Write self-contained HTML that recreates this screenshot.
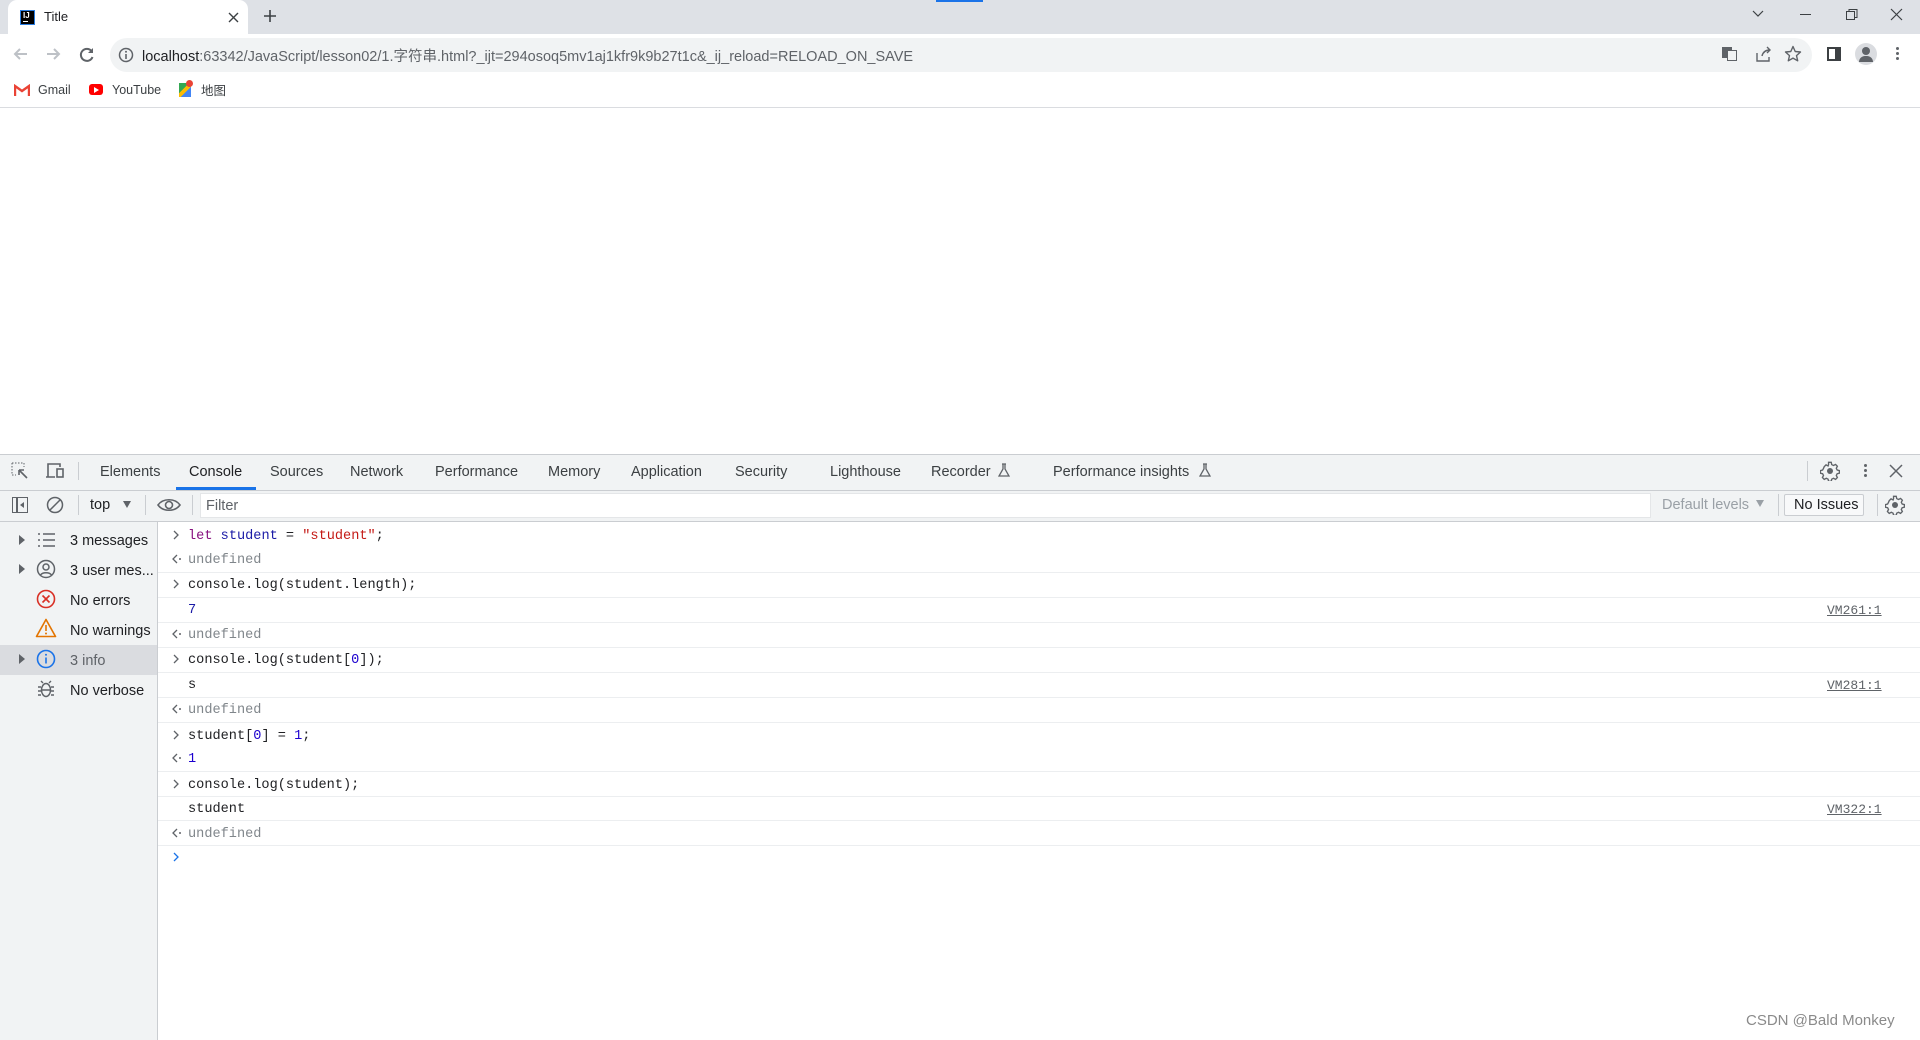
<!DOCTYPE html>
<html><head><meta charset="utf-8"><style>
*{margin:0;padding:0;box-sizing:border-box}
body{width:1920px;height:1040px;position:relative;overflow:hidden;background:#fff;font-family:"Liberation Sans","Noto Sans CJK SC",sans-serif;color:#202124}
.a{position:absolute;white-space:nowrap}
.ui{font-size:14.5px;color:#3c4043}
.m{font-family:"Liberation Mono",monospace;font-size:13.6px;color:#202124}
.hl{position:absolute;left:158px;right:0;height:1px;background:#eceef0}
.g{color:#80868b}
.ch{position:absolute;left:171px}
</style></head><body>
<!-- tab strip -->
<div class="a" style="left:0;top:0;width:1920px;height:34px;background:#dee1e6"></div>
<div class="a" style="left:936px;top:0;width:47px;height:2px;background:#1a73e8"></div>
<div class="a" style="left:8px;top:0;width:240px;height:34px;background:#fff;border-radius:9px 9px 0 0"></div>
<div class="a" style="left:20px;top:10px;width:15px;height:15px;background:#000;border:1px solid #2a7de1"></div>
<div class="a" style="left:23px;top:11px;font-size:8px;color:#fff;font-weight:bold">IJ</div>
<div class="a" style="left:23px;top:21px;width:5px;height:1px;background:#fff"></div>
<div class="a" style="left:44px;top:9px;font-size:13px;color:#202124">Title</div>
<svg class="a" style="left:228px;top:12px" width="11" height="11"><path d="M1 1l9 9M10 1L1 10" stroke="#3c4043" stroke-width="1.4"/></svg>
<svg class="a" style="left:263px;top:9px" width="14" height="14"><path d="M7 1v12M1 7h12" stroke="#3c4043" stroke-width="1.6"/></svg>
<svg class="a" style="left:1750px;top:8px" width="16" height="12"><path d="M3 3l5 5 5-5" stroke="#3c4043" fill="none" stroke-width="1.2"/></svg>
<div class="a" style="left:1800px;top:14px;width:11px;height:1px;background:#3c4043"></div>
<svg class="a" style="left:1845px;top:8px" width="14" height="14"><rect x="1.5" y="3.5" width="8" height="8" fill="none" stroke="#3c4043"/><path d="M4 3.5V1.5h8v8h-2" fill="none" stroke="#3c4043"/></svg>
<svg class="a" style="left:1890px;top:8px" width="14" height="14"><path d="M1 1l11 11M12 1L1 12" stroke="#3c4043" stroke-width="1.2"/></svg>
<!-- toolbar -->
<svg class="a" style="left:12px;top:46px" width="18" height="16"><path d="M15 8H3M8 3L3 8l5 5" stroke="#bdc1c6" stroke-width="2" fill="none"/></svg>
<svg class="a" style="left:44px;top:46px" width="18" height="16"><path d="M3 8h12M10 3l5 5-5 5" stroke="#bdc1c6" stroke-width="2" fill="none"/></svg>
<svg class="a" style="left:78px;top:46px" width="18" height="18"><path d="M13.5 5A6 6 0 1 0 14.5 11" stroke="#5f6368" stroke-width="2" fill="none"/><path d="M15 2v5h-5z" fill="#5f6368"/></svg>
<div class="a" style="left:110px;top:38px;width:1702px;height:34px;background:#f1f3f4;border-radius:17px"></div>
<svg class="a" style="left:118px;top:47px" width="16" height="16"><circle cx="8" cy="8" r="6.5" stroke="#5f6368" stroke-width="1.5" fill="none"/><path d="M8 7v5" stroke="#5f6368" stroke-width="1.6"/><circle cx="8" cy="4.8" r="1" fill="#5f6368"/></svg>
<div class="a" style="left:142px;top:45px;font-size:14.5px;color:#202124">localhost<span style="color:#5f6368">:63342/JavaScript/lesson02/1.字符串.html?_ijt=294osoq5mv1aj1kfr9k9b27t1c&amp;_ij_reload=RELOAD_ON_SAVE</span></div>
<div class="a" style="left:1722px;top:47px;width:10px;height:11px;background:#5f6368"></div>
<div class="a" style="left:1727px;top:50px;width:10px;height:11px;border:1px solid #5f6368;background:#f1f3f4"></div>
<svg class="a" style="left:1754px;top:45px" width="18" height="18"><path d="M3 8v8h12v-4M8 11c1-4 4-6 8-6M13 2l3 3-3 3" stroke="#5f6368" stroke-width="1.4" fill="none"/></svg>
<svg class="a" style="left:1784px;top:45px" width="18" height="18"><path d="M9 1.5l2.2 5 5.3.5-4 3.6 1.2 5.2L9 13.1 4.3 15.8l1.2-5.2-4-3.6 5.3-.5z" stroke="#5f6368" stroke-width="1.4" fill="none" stroke-linejoin="round"/></svg>
<div class="a" style="left:1827px;top:47px;width:14px;height:14px;border:2px solid #3c4043;border-right-width:6px"></div>
<div class="a" style="left:1855px;top:43px;width:22px;height:22px;border-radius:50%;background:#dadce0"></div>
<div class="a" style="left:1862px;top:47px;width:8px;height:8px;border-radius:50%;background:#5f6368"></div>
<div class="a" style="left:1859px;top:56px;width:14px;height:6px;border-radius:6px 6px 0 0;background:#5f6368"></div>
<div class="a" style="left:1896px;top:47px;width:3px;height:3px;border-radius:50%;background:#5f6368;box-shadow:0 5px 0 #5f6368,0 10px 0 #5f6368"></div>
<!-- bookmarks -->
<svg class="a" style="left:14px;top:84px" width="16" height="12"><path d="M1 12V2l7 5 7-5v10" stroke="#ea4335" stroke-width="2.4" fill="none"/></svg>
<div class="a" style="left:38px;top:83px;font-size:12.5px;color:#3c4043">Gmail</div>
<div class="a" style="left:89px;top:84px;width:14px;height:11px;border-radius:3px;background:#f00"></div>
<div class="a" style="left:94px;top:87px;width:0;height:0;border-left:5px solid #fff;border-top:3px solid transparent;border-bottom:3px solid transparent"></div>
<div class="a" style="left:112px;top:83px;font-size:12.5px;color:#3c4043">YouTube</div>
<div class="a" style="left:179px;top:83px;width:12px;height:14px;background:linear-gradient(135deg,#34a853 40%,#fbbc04 40%,#fbbc04 60%,#4285f4 60%)"></div>
<div class="a" style="left:186px;top:80px;width:7px;height:7px;border-radius:50%;background:#ea4335"></div>
<div class="a" style="left:201px;top:80px;font-size:12.5px;color:#3c4043">地图</div>
<div class="a" style="left:0;top:107px;width:1920px;height:1px;background:#dadce0"></div>
<!-- devtools tab bar -->
<div class="a" style="left:0;top:454px;width:1920px;height:67px;background:#f1f3f4;border-top:1px solid #cacdd1"></div>
<div class="a" style="left:0;top:490px;width:1920px;height:1px;background:#cacdd1"></div>
<div class="a" style="left:0;top:521px;width:1920px;height:1px;background:#cacdd1"></div>
<svg class="a" style="left:11px;top:462px" width="18" height="18"><path d="M1 1h12v4M1 1v12h4" stroke="#5f6368" stroke-dasharray="1.5 1.5" fill="none"/><path d="M8 8l8 8M8 8h5M8 8v5" stroke="#5f6368" stroke-width="1.6" fill="none"/></svg>
<svg class="a" style="left:45px;top:462px" width="22" height="18"><path d="M3 15V2h12v3M1 15h9" stroke="#5f6368" stroke-width="1.6" fill="none"/><rect x="12" y="7" width="6" height="8" stroke="#5f6368" stroke-width="1.6" fill="none"/></svg>
<div class="a" style="left:78px;top:462px;width:1px;height:18px;background:#cacdd1"></div>
<div class="a ui" style="left:100px;top:464px">Elements</div>
<div class="a ui" style="left:189px;top:464px;color:#202124">Console</div>
<div class="a" style="left:176px;top:487px;width:80px;height:3px;background:#1a73e8"></div>
<div class="a ui" style="left:270px;top:464px">Sources</div>
<div class="a ui" style="left:350px;top:464px">Network</div>
<div class="a ui" style="left:435px;top:464px">Performance</div>
<div class="a ui" style="left:548px;top:464px">Memory</div>
<div class="a ui" style="left:631px;top:464px">Application</div>
<div class="a ui" style="left:735px;top:464px">Security</div>
<div class="a ui" style="left:830px;top:464px">Lighthouse</div>
<div class="a ui" style="left:931px;top:464px">Recorder</div>
<svg class="a" style="left:998px;top:463px" width="12" height="15"><path d="M4 1h4M5 1v5L1 13h10L7 6V1" stroke="#5f6368" stroke-width="1.3" fill="none"/></svg>
<div class="a ui" style="left:1053px;top:464px">Performance insights</div>
<svg class="a" style="left:1199px;top:463px" width="12" height="15"><path d="M4 1h4M5 1v5L1 13h10L7 6V1" stroke="#5f6368" stroke-width="1.3" fill="none"/></svg>
<div class="a" style="left:1807px;top:461px;width:1px;height:20px;background:#cacdd1"></div>
<svg class="a" style="left:1820px;top:461px" width="20" height="20" viewBox="0 0 20 20"><path d="M8.5 1.5h3l.5 2.5 2 1 2.3-1.2 2 2-1.2 2.3 1 2 2.4.5v3l-2.4.5-1 2 1.2 2.3-2 2-2.3-1.2-2 1-.5 2.4h-3l-.5-2.4-2-1-2.3 1.2-2-2 1.2-2.3-1-2-2.4-.5v-3l2.4-.5 1-2L3.7 6.3l2-2L8 5.5l.5-1.5z" transform="scale(.9) translate(1 0)" stroke="#5f6368" stroke-width="1.5" fill="none"/><circle cx="10" cy="10" r="3" fill="#5f6368"/></svg>
<div class="a" style="left:1864px;top:464px;width:3px;height:3px;border-radius:50%;background:#5f6368;box-shadow:0 5px 0 #5f6368,0 10px 0 #5f6368"></div>
<svg class="a" style="left:1889px;top:464px" width="14" height="14"><path d="M1 1l12 12M13 1L1 13" stroke="#5f6368" stroke-width="1.5"/></svg>
<!-- console toolbar -->
<div class="a" style="left:12px;top:497px;width:16px;height:16px;border:1.5px solid #5f6368"></div>
<div class="a" style="left:16px;top:497px;width:1.5px;height:16px;background:#5f6368"></div>
<div class="a" style="left:20px;top:502px;width:0;height:0;border-right:4px solid #5f6368;border-top:3px solid transparent;border-bottom:3px solid transparent"></div>
<svg class="a" style="left:46px;top:496px" width="18" height="18"><circle cx="9" cy="9" r="7.5" stroke="#5f6368" stroke-width="1.5" fill="none"/><path d="M4 14L14 4" stroke="#5f6368" stroke-width="1.5"/></svg>
<div class="a" style="left:78px;top:495px;width:1px;height:20px;background:#cacdd1"></div>
<div class="a ui" style="left:90px;top:497px;color:#202124">top</div>
<div class="a" style="left:123px;top:501px;border-top:7px solid #5f6368;border-left:4.5px solid transparent;border-right:4.5px solid transparent"></div>
<div class="a" style="left:145px;top:495px;width:1px;height:20px;background:#cacdd1"></div>
<svg class="a" style="left:157px;top:496px" width="24" height="18"><path d="M1 9C6 2 18 2 23 9C18 16 6 16 1 9Z" stroke="#5f6368" stroke-width="1.6" fill="none"/><circle cx="12" cy="9" r="3.5" stroke="#5f6368" stroke-width="1.6" fill="none"/></svg>
<div class="a" style="left:192px;top:495px;width:1px;height:20px;background:#cacdd1"></div>
<div class="a" style="left:200px;top:493px;width:1451px;height:25px;background:#fff;border:1px solid #e4e6e8"></div>
<div class="a ui" style="left:206px;top:498px;color:#5f6368">Filter</div>
<div class="a ui" style="left:1662px;top:497px;color:#9aa0a6">Default levels</div>
<div class="a" style="left:1756px;top:500px;border-top:7px solid #9aa0a6;border-left:4.5px solid transparent;border-right:4.5px solid transparent"></div>
<div class="a" style="left:1778px;top:494px;width:1px;height:22px;background:#cacdd1"></div>
<div class="a" style="left:1784px;top:494px;width:80px;height:22px;border:1px solid #cacdd1;border-radius:2px;background:#f8f9fa"></div>
<div class="a ui" style="left:1794px;top:497px;color:#202124">No Issues</div>
<div class="a" style="left:1877px;top:494px;width:1px;height:22px;background:#cacdd1"></div>
<svg class="a" style="left:1885px;top:495px" width="20" height="20" viewBox="0 0 20 20"><path d="M8.5 1.5h3l.5 2.5 2 1 2.3-1.2 2 2-1.2 2.3 1 2 2.4.5v3l-2.4.5-1 2 1.2 2.3-2 2-2.3-1.2-2 1-.5 2.4h-3l-.5-2.4-2-1-2.3 1.2-2-2 1.2-2.3-1-2-2.4-.5v-3l2.4-.5 1-2L3.7 6.3l2-2L8 5.5l.5-1.5z" transform="scale(.9) translate(1 0)" stroke="#5f6368" stroke-width="1.5" fill="none"/><circle cx="10" cy="10" r="3" fill="#5f6368"/></svg>
<!-- sidebar -->
<div class="a" style="left:0;top:522px;width:158px;height:518px;background:#f1f3f4;border-right:1px solid #cacdd1"></div>
<div class="a" style="left:0;top:645px;width:157px;height:30px;background:#dadce0"></div>
<div class="a" style="left:19px;top:535px;border-left:6px solid #5f6368;border-top:5px solid transparent;border-bottom:5px solid transparent"></div>
<div class="a" style="left:19px;top:564px;border-left:6px solid #5f6368;border-top:5px solid transparent;border-bottom:5px solid transparent"></div>
<div class="a" style="left:19px;top:654px;border-left:6px solid #5f6368;border-top:5px solid transparent;border-bottom:5px solid transparent"></div>
<svg class="a" style="left:36px;top:531px" width="20" height="18"><path d="M7 3h12M7 9h12M7 15h12" stroke="#5f6368" stroke-width="1.6"/><path d="M2 3h2M2 9h2M2 15h2" stroke="#5f6368" stroke-width="1.6"/></svg>
<svg class="a" style="left:36px;top:559px" width="20" height="20"><circle cx="10" cy="10" r="8.5" stroke="#5f6368" stroke-width="1.5" fill="none"/><circle cx="10" cy="8" r="3" stroke="#5f6368" stroke-width="1.5" fill="none"/><path d="M4.5 16c2-3 9-3 11 0" stroke="#5f6368" stroke-width="1.5" fill="none"/></svg>
<svg class="a" style="left:36px;top:589px" width="20" height="20"><circle cx="10" cy="10" r="8.5" stroke="#d93025" stroke-width="1.6" fill="none"/><path d="M6.5 6.5l7 7M13.5 6.5l-7 7" stroke="#d93025" stroke-width="1.6"/></svg>
<svg class="a" style="left:35px;top:618px" width="22" height="20"><path d="M11 1.5L20.5 18.5H1.5Z" stroke="#e37400" stroke-width="1.6" fill="none" stroke-linejoin="round"/><path d="M11 7v6" stroke="#e37400" stroke-width="1.6"/><circle cx="11" cy="15.5" r="1" fill="#e37400"/></svg>
<svg class="a" style="left:36px;top:649px" width="20" height="20"><circle cx="10" cy="10" r="8.5" stroke="#1a73e8" stroke-width="1.6" fill="none"/><path d="M10 8.5v6" stroke="#1a73e8" stroke-width="1.6"/><circle cx="10" cy="5.8" r="1" fill="#1a73e8"/></svg>
<svg class="a" style="left:37px;top:679px" width="18" height="20"><ellipse cx="9" cy="11" rx="4.5" ry="6.5" stroke="#5f6368" stroke-width="1.5" fill="none"/><path d="M4 8H1M4 12H1M4 16H1M14 8h3M14 12h3M14 16h3M6 4L4 2M12 4l2-2M5 11h8" stroke="#5f6368" stroke-width="1.4"/></svg>
<div class="a ui" style="left:70px;top:533px;color:#202124">3 messages</div>
<div class="a ui" style="left:70px;top:563px;color:#202124">3 user mes...</div>
<div class="a ui" style="left:70px;top:593px;color:#202124">No errors</div>
<div class="a ui" style="left:70px;top:623px;color:#202124">No warnings</div>
<div class="a ui" style="left:70px;top:653px;color:#5f6368">3 info</div>
<div class="a ui" style="left:70px;top:683px;color:#202124">No verbose</div>
<!-- console -->
<div class="hl" style="top:572px"></div><div class="hl" style="top:597px"></div><div class="hl" style="top:622px"></div><div class="hl" style="top:647px"></div><div class="hl" style="top:672px"></div><div class="hl" style="top:697px"></div><div class="hl" style="top:722px"></div><div class="hl" style="top:771px"></div><div class="hl" style="top:796px"></div><div class="hl" style="top:820px"></div><div class="hl" style="top:845px"></div>
<svg width="0" height="0" style="position:absolute"><defs>
<g id="in"><path d="M3 2l4 4-4 4" stroke="#5f6368" stroke-width="1.3" fill="none"/></g>
<g id="out"><path d="M6 2L2 6l4 4" stroke="#5f6368" stroke-width="1.3" fill="none"/><circle cx="9" cy="6" r="1" fill="#5f6368"/></g>
</defs></svg>
<svg class="ch" style="top:529px" width="12" height="12"><use href="#in"/></svg>
<div class="a m" style="left:188px;top:529px"><span style="color:#881280">let</span> <span style="color:#1a1aa6">student</span> = <span style="color:#c41a16">"student"</span>;</div>
<svg class="ch" style="top:553px" width="12" height="12"><use href="#out"/></svg>
<div class="a m g" style="left:188px;top:553px">undefined</div>
<svg class="ch" style="top:578px" width="12" height="12"><use href="#in"/></svg>
<div class="a m" style="left:188px;top:578px">console.log(student.length);</div>
<div class="a m" style="left:188px;top:603px;color:#1a1aa6">7</div>
<svg class="ch" style="top:628px" width="12" height="12"><use href="#out"/></svg>
<div class="a m g" style="left:188px;top:628px">undefined</div>
<svg class="ch" style="top:653px" width="12" height="12"><use href="#in"/></svg>
<div class="a m" style="left:188px;top:653px">console.log(student[<span style="color:#1c00cf">0</span>]);</div>
<div class="a m" style="left:188px;top:678px">s</div>
<svg class="ch" style="top:703px" width="12" height="12"><use href="#out"/></svg>
<div class="a m g" style="left:188px;top:703px">undefined</div>
<svg class="ch" style="top:729px" width="12" height="12"><use href="#in"/></svg>
<div class="a m" style="left:188px;top:729px">student[<span style="color:#1c00cf">0</span>] = <span style="color:#1c00cf">1</span>;</div>
<svg class="ch" style="top:752px" width="12" height="12"><use href="#out"/></svg>
<div class="a m" style="left:188px;top:752px;color:#1c00cf">1</div>
<svg class="ch" style="top:778px" width="12" height="12"><use href="#in"/></svg>
<div class="a m" style="left:188px;top:778px">console.log(student);</div>
<div class="a m" style="left:188px;top:802px">student</div>
<svg class="ch" style="top:827px" width="12" height="12"><use href="#out"/></svg>
<div class="a m g" style="left:188px;top:827px">undefined</div>
<svg class="ch" style="top:851px" width="12" height="12"><path d="M3 2l4 4-4 4" stroke="#1a73e8" stroke-width="1.3" fill="none"/></svg>
<div class="a m" style="left:1827px;top:603px;color:#5f6368;text-decoration:underline;font-size:13px">VM261:1</div>
<div class="a m" style="left:1827px;top:678px;color:#5f6368;text-decoration:underline;font-size:13px">VM281:1</div>
<div class="a m" style="left:1827px;top:802px;color:#5f6368;text-decoration:underline;font-size:13px">VM322:1</div>
<div class="a" style="left:1746px;top:1012px;font-size:15px;color:#8a8a8a">CSDN @Bald Monkey</div>
</body></html>
